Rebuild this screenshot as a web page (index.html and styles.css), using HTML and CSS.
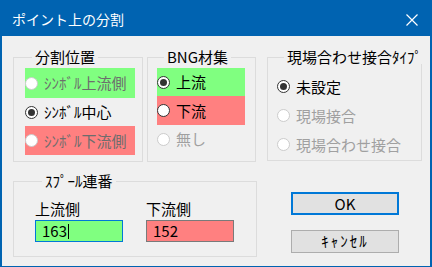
FILE: index.html
```html
<!DOCTYPE html>
<html>
<head>
	<title>ポイント上の分割</title>
	<link rel="stylesheet" href="styles.css">
</head>
<body>
	<div class="ventana">
		<div class="titulo">
			<span class="titulo-texto">ポイント上の分割</span>
			<svg class="cerrar" width="12" height="12" viewBox="0 0 12 12">
				<path d="M0.5 0.5 L11.5 11.5 M11.5 0.5 L0.5 11.5" stroke="#ffffff" stroke-width="1.2" fill="none"/>
			</svg>
		</div>

		<div class="cliente">
			<div class="fila-arriba">
				<fieldset class="grupo g-posicion">
					<legend>分割位置</legend>
					<div class="opcion verde apagado h30"><span class="radio"></span>ｼﾝﾎﾞﾙ上流側</div>
					<div class="opcion h28"><span class="radio marcado"></span>ｼﾝﾎﾞﾙ中心</div>
					<div class="opcion rojo apagado h29"><span class="radio"></span>ｼﾝﾎﾞﾙ下流側</div>
				</fieldset>

				<fieldset class="grupo g-bng">
					<legend>BNG材集</legend>
					<div class="opcion verde h28"><span class="radio marcado"></span>上流</div>
					<div class="opcion rojo h29"><span class="radio"></span>下流</div>
					<div class="opcion gris h28"><span class="radio"></span>無し</div>
				</fieldset>

				<fieldset class="grupo g-tipo">
					<legend>現場合わせ接合ﾀｲﾌﾟ</legend>
					<div class="opcion h29"><span class="radio marcado"></span>未設定</div>
					<div class="opcion gris h29"><span class="radio"></span>現場接合</div>
					<div class="opcion gris h29"><span class="radio"></span>現場合わせ接合</div>
				</fieldset>
			</div>

			<div class="fila-abajo">
				<fieldset class="grupo g-spool">
					<legend>ｽﾌﾟｰﾙ連番</legend>
					<div class="campos">
						<div class="campo">
							<div class="etiqueta">上流側</div>
							<div class="caja caja-verde">163<span class="cursor"></span></div>
						</div>
						<div class="campo">
							<div class="etiqueta">下流側</div>
							<div class="caja caja-roja">152</div>
						</div>
					</div>
				</fieldset>

				<div class="botones">
					<div class="boton boton-ok">OK</div>
					<div class="boton boton-cancelar">ｷｬﾝｾﾙ</div>
				</div>
			</div>
		</div>
	</div>
</body>
</html>
```

FILE: styles.css
```css
body{
	margin: 0;
	font-family: "Noto Sans CJK JP", "Noto Sans", sans-serif;
	color: #000000;
}

.ventana{
	width: 432px;
	height: 267px;
	box-sizing: border-box;
	border: 2px solid #0063b1;
	border-top: 0;
	border-bottom-width: 1px;
	background: #f0f0f0;
	display: flex;
	flex-direction: column;
}

.titulo{
	height: 36px;
	flex: none;
	background: #0063b1;
	display: flex;
	align-items: center;
	padding: 2px 12px 0 10px;
	box-sizing: border-box;
}

.titulo-texto{
	flex: 1;
	color: #ffffff;
	font-size: 14px;
	line-height: 18px;
}

.cerrar{
	margin-top: 2px;
}

.cliente{
	padding: 14px 0 0 11px;
}

.fila-arriba{
	display: flex;
}

.grupo{
	margin: 0;
	padding: 0;
	min-width: 0;
	box-sizing: border-box;
	border: 1px solid #dcdcdc;
}

.grupo legend{
	margin-left: 7px;
	padding: 0 3px;
	font-size: 15px;
	line-height: 14px;
	white-space: nowrap;
}

.g-posicion{
	width: 130px;
	height: 112px;
	padding: 4px 7px 0 11px;
}

.g-bng{
	width: 109px;
	height: 112px;
	margin-left: 4px;
	padding: 4px 10px 0 9px;
}

.g-tipo{
	width: 155px;
	height: 111px;
	margin-left: 11px;
	padding: 8px 9px 0 9px;
}

.opcion{
	display: flex;
	align-items: center;
	font-size: 15px;
	line-height: 18px;
	white-space: nowrap;
}

.h28{ height: 28px; }
.h29{ height: 29px; }
.h30{ height: 30px; }

.verde{ background: #80ff80; }
.rojo{ background: #ff8080; }

.apagado{ color: #6d6d6d; }
.gris{ color: #a0a0a0; }

.radio{
	width: 13px;
	height: 13px;
	box-sizing: border-box;
	border: 1px solid #333333;
	border-radius: 50%;
	background: #ffffff;
	margin-right: 6px;
	flex: none;
	display: flex;
	align-items: center;
	justify-content: center;
}

.apagado .radio,
.gris .radio{
	border-color: #cccccc;
}

.radio.marcado::after{
	content: "";
	width: 7px;
	height: 7px;
	border-radius: 50%;
	background: #333333;
}

.fila-abajo{
	display: flex;
	margin-top: 12px;
}

.g-spool{
	width: 244px;
	height: 83px;
	padding: 12px 0 0 21px;
}

.campos{
	display: flex;
	gap: 23px;
}

.etiqueta{
	font-size: 15px;
	line-height: 18px;
	height: 20px;
}

.caja{
	width: 88px;
	height: 22px;
	box-sizing: border-box;
	padding-left: 6px;
	font-size: 15px;
	line-height: 20px;
	display: flex;
	align-items: center;
}

.caja-verde{
	background: #80ff80;
	border: 1px solid #0078d7;
}

.caja-roja{
	background: #ff8080;
	border: 1px solid #7a7a7a;
}

.cursor{
	width: 1px;
	height: 15px;
	background: #000000;
	margin-left: 1px;
}

.botones{
	margin-left: 34px;
	padding-top: 18px;
	display: flex;
	flex-direction: column;
	gap: 15px;
}

.boton{
	width: 108px;
	height: 23px;
	box-sizing: border-box;
	background: #e1e1e1;
	border: 1px solid #adadad;
	font-size: 15px;
	line-height: 20px;
	text-align: center;
}

.boton-ok{
	border: 2px solid #0078d7;
	line-height: 19px;
}

.boton-cancelar{
	letter-spacing: 2px;
}
```
